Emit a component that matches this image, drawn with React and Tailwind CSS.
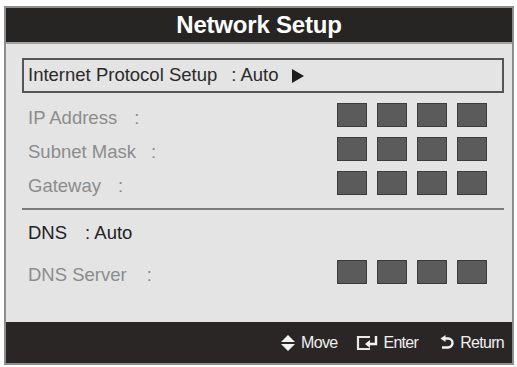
import React from "react";

const font = { fontFamily: '"Liberation Sans", Arial, sans-serif' };

function Boxes() {
  return (
    <div className="flex gap-[10px]">
      {[0, 1, 2, 3].map((i) => (
        <div key={i} className="w-[30px] h-[24px] bg-[#5b5b5b] border border-[#3a3a3a]" />
      ))}
    </div>
  );
}

function Row({ label, colonGap, children, className = "" }) {
  return (
    <div className={"flex items-center justify-between pl-[6px] pr-[17px] " + className}>
      <div className="flex items-center text-[18.5px] text-[#8c8c8c] leading-none pt-[6px]">
        <span>{label}</span>
        <span style={{ marginLeft: colonGap }}>:</span>
      </div>
      <Boxes />
    </div>
  );
}

function MoveIcon() {
  return (
    <svg width="16" height="18" viewBox="0 0 16 18">
      <polygon points="8,1 15,8 1,8" fill="#f2f2f2" />
      <polygon points="1,10 15,10 8,17" fill="#f2f2f2" />
    </svg>
  );
}

function EnterIcon() {
  return (
    <svg width="26" height="16" viewBox="0 0 26 16">
      <path d="M14 2 H2 V14 H14" fill="none" stroke="#e8e8e8" strokeWidth="2.2" />
      <path d="M20 1 V9 H11" fill="none" stroke="#f2f2f2" strokeWidth="2.4" />
      <polygon points="9,9 14,5 14,13" fill="#f2f2f2" />
    </svg>
  );
}

function ReturnIcon() {
  return (
    <svg width="14" height="15" viewBox="0 0 14 15">
      <path d="M4 3.5 H8 A4.5 4.5 0 0 1 8 12.5 H2" fill="none" stroke="#f2f2f2" strokeWidth="2.4" />
      <polygon points="0.5,3.5 5.5,0 5.5,7" fill="#f2f2f2" />
    </svg>
  );
}

export default function App() {
  return (
    <div className="w-[517px] h-[367px] bg-white pt-[6px] pl-[4px]" style={font}>
      <div className="w-[510px] h-[359px] border-2 border-[#8e8e8e] flex flex-col bg-[#e4e4e4]">
        <div className="h-[34px] bg-[#272424] flex items-center justify-center border-b-2 border-[#a3a3a3] box-content">
          <span className="text-white font-bold text-[24px] leading-none tracking-[-0.2px]">Network Setup</span>
        </div>
        <div className="flex-1 flex flex-col pl-[16px] pr-[8px] pt-[14px]">
          <div className="h-[35px] border-2 border-[#555] flex items-center pl-[4px] text-[18.5px] text-[#2a2a2a] leading-none">
            <span>Internet Protocol Setup</span>
            <span className="ml-[14px]">: Auto</span>
            <svg className="ml-[13px]" width="12" height="14" viewBox="0 0 12 14">
              <polygon points="0,0 12,7 0,14" fill="#1e1e1e" />
            </svg>
          </div>
          <div className="mt-[5px] flex flex-col">
            <Row label="IP Address" colonGap="17px" className="h-[34px]" />
            <Row label="Subnet Mask" colonGap="15px" className="h-[34px]" />
            <Row label="Gateway" colonGap="17px" className="h-[34px]" />
          </div>
          <div className="mt-[8px] h-[2px] bg-[#7a7a7a]" />
          <div className="h-[42px] flex items-center pl-[6px] pt-[4px] text-[18.5px] text-[#222] leading-none">
            <span>DNS</span>
            <span className="ml-[18px]">: Auto</span>
          </div>
          <Row label="DNS Server" colonGap="20px" className="h-[40px]" />
        </div>
        <div className="h-[41px] bg-[#2a2626] flex items-center justify-end pr-[8px] text-[16px] text-[#f0f0f0] leading-none">
          <div className="flex items-center gap-[5px]">
            <MoveIcon />
            <span className="tracking-[-0.7px]">Move</span>
          </div>
          <div className="flex items-center gap-[1px] ml-[19px]">
            <EnterIcon />
            <span className="tracking-[-0.7px]">Enter</span>
          </div>
          <div className="flex items-center gap-[6px] ml-[22px]">
            <ReturnIcon />
            <span className="tracking-[-0.7px]">Return</span>
          </div>
        </div>
      </div>
    </div>
  );
}
